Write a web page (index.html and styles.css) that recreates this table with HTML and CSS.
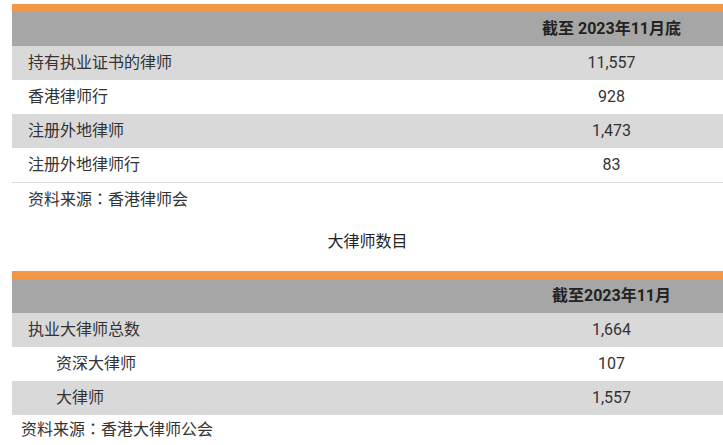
FILE: index.html
```html
<!DOCTYPE html>
<html lang="zh-CN">
<head>
<meta charset="utf-8">
<title>律师数目</title>
<link rel="stylesheet" href="styles.css">
</head>
<body>
<div class="page">
  <table class="data">
    <thead>
      <tr><th class="label"></th><th class="value">截至 2023年11月底</th></tr>
    </thead>
    <tbody>
      <tr class="odd"><td class="label">持有执业证书的律师</td><td class="value">11,557</td></tr>
      <tr><td class="label">香港律师行</td><td class="value">928</td></tr>
      <tr class="odd"><td class="label">注册外地律师</td><td class="value">1,473</td></tr>
      <tr class="last"><td class="label">注册外地律师行</td><td class="value">83</td></tr>
    </tbody>
    <tfoot>
      <tr><td class="label source" colspan="2">资料来源<span class="colon" lang="zh-TW">：</span>香港律师会</td></tr>
    </tfoot>
  </table>

  <div class="title">大律师数目</div>

  <table class="data">
    <thead>
      <tr><th class="label"></th><th class="value">截至2023年11月</th></tr>
    </thead>
    <tbody>
      <tr class="odd"><td class="label">执业大律师总数</td><td class="value">1,664</td></tr>
      <tr><td class="label indent">资深大律师</td><td class="value">107</td></tr>
      <tr class="odd"><td class="label indent">大律师</td><td class="value">1,557</td></tr>
    </tbody>
  </table>
  <div class="source2">资料来源<span class="colon" lang="zh-TW">：</span>香港大律师公会</div>
</div>
</body>
</html>
```

FILE: styles.css
```css
html, body {
  margin: 0;
  padding: 0;
  background: #ffffff;
  overflow: hidden;
}

body {
  font-family: Roboto, "Noto Sans CJK SC", sans-serif;
  font-size: 16px;
  color: #333333;
}

.page {
  padding: 4px 0 0 12px;
  width: 711px;
}

.data {
  width: 711px;
  border-collapse: collapse;
  table-layout: fixed;
}

.data thead tr {
  border-top: 8px solid #f39747;
  background: #a6a6a6;
}

.data th,
.data td {
  height: 34px;
  padding: 0;
  line-height: 34px;
  vertical-align: middle;
  white-space: nowrap;
}

.data th.label,
.data td.label {
  width: 472px;
  text-align: left;
  padding-left: 16px;
}

.data th.value,
.data td.value {
  text-align: center;
}

.data th {
  font-weight: 700;
  color: #222222;
}

.data tr.odd {
  background: #d9d9d9;
}

.data tr.last {
  border-bottom: 1px solid #dcdcdc;
}

.data td.indent {
  padding-left: 44px;
}

.data td.source {
  height: 34px;
}

.colon {
  font-family: "Noto Sans CJK TC", "Noto Sans CJK SC", sans-serif;
  line-height: 0;
}

.title {
  margin-top: 8px;
  margin-bottom: 12px;
  line-height: 34px;
  text-align: center;
  color: #222222;
}

.source2 {
  padding-left: 9px;
  line-height: 30px;
}
```
